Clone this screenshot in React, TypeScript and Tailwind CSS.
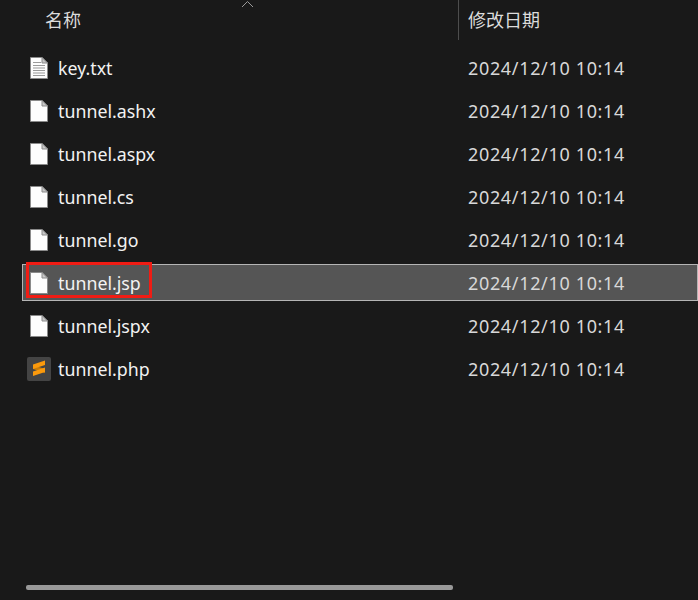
const files = [
  { name: "key.txt", icon: "text" },
  { name: "tunnel.ashx", icon: "blank" },
  { name: "tunnel.aspx", icon: "blank" },
  { name: "tunnel.cs", icon: "blank" },
  { name: "tunnel.go", icon: "blank" },
  { name: "tunnel.jsp", icon: "blank", selected: true },
  { name: "tunnel.jspx", icon: "blank" },
  { name: "tunnel.php", icon: "sublime" },
];

function FileIcon({ kind }: { kind: string }) {
  if (kind === "sublime") {
    return (
      <svg width="24" height="24" viewBox="0 0 24 24">
        <rect x="0" y="0" width="24" height="24" rx="2" fill="#444444" />
        <path d="M6 8 L18 12 V16 L6 12 Z" fill="#c87d0a" />
        <path d="M6 7.5 L18 3.5 V8 L6 12 Z" fill="#fb9a0c" />
        <path d="M6 14.5 L18 10.5 V15 L6 19 Z" fill="#fb9a0c" />
      </svg>
    );
  }
  return (
    <svg width="18" height="22" viewBox="0 0 18 22">
      <path d="M0.5 0.5 H12 L17.5 6 V21.5 H0.5 Z" fill="#fdfdfd" stroke="#8a8a8a" />
      <path d="M12 0.5 V6 H17.5 Z" fill="#c8c8c8" stroke="#8a8a8a" />
      {kind === "text" && (
        <path
          d="M3 5.5 H11 M3 8.5 H15 M3 11 H15 M3 13.5 H15 M3 16 H15 M3 18.5 H15"
          stroke="#9a9a9a"
          strokeWidth="1.2"
        />
      )}
    </svg>
  );
}

export default function App() {
  return (
    <div className="flex h-[600px] w-[698px] flex-col overflow-hidden bg-[#191919] font-['Noto_Sans','Noto_Sans_CJK_SC',sans-serif] text-[18px] text-[#e4e4e4]">
      <div className="relative flex h-10 shrink-0">
        <div className="flex w-[458px] items-center pl-[45px] pt-[1px] text-[#dcdcdc]">名称</div>
        <svg className="absolute left-[241px] top-0" width="13" height="8" viewBox="0 0 13 8">
          <path d="M1 7 L6.5 1.5 L12 7" fill="none" stroke="#9a9a9a" strokeWidth="1" />
        </svg>
        <div className="flex flex-1 items-center border-l border-[#4d4d4d] pl-[9px] pt-[1px] text-[#dcdcdc]">修改日期</div>
      </div>
      <div className="flex flex-1 flex-col gap-[6px] pl-[22px] pt-[9px]">
        {files.map((f) => (
          <div
            key={f.name}
            className={`relative flex h-[37px] shrink-0 items-center border ${
              f.selected ? "border-[#b5b5b5] bg-[#555555]" : "border-transparent"
            }`}
          >
            <div className="flex w-[35px] shrink-0 justify-center pr-[3px]">
              <FileIcon kind={f.icon} />
            </div>
            <div className="w-[410px] shrink-0 pt-[1px] text-[17.8px] text-[#f2f2f2]">{f.name}</div>
            <div className="pt-[1px] tracking-[0.66px] text-[#d8d8d8]">2024/12/10 10:14</div>
            {f.selected && (
              <div className="absolute left-[3px] top-[-3px] h-[36px] w-[126px] border-[3px] border-[#f01c14]" />
            )}
          </div>
        ))}
      </div>
      <div className="mb-[10px] ml-[26px] h-[5px] w-[427px] shrink-0 rounded-[2px] bg-[#999999]" />
    </div>
  );
}
